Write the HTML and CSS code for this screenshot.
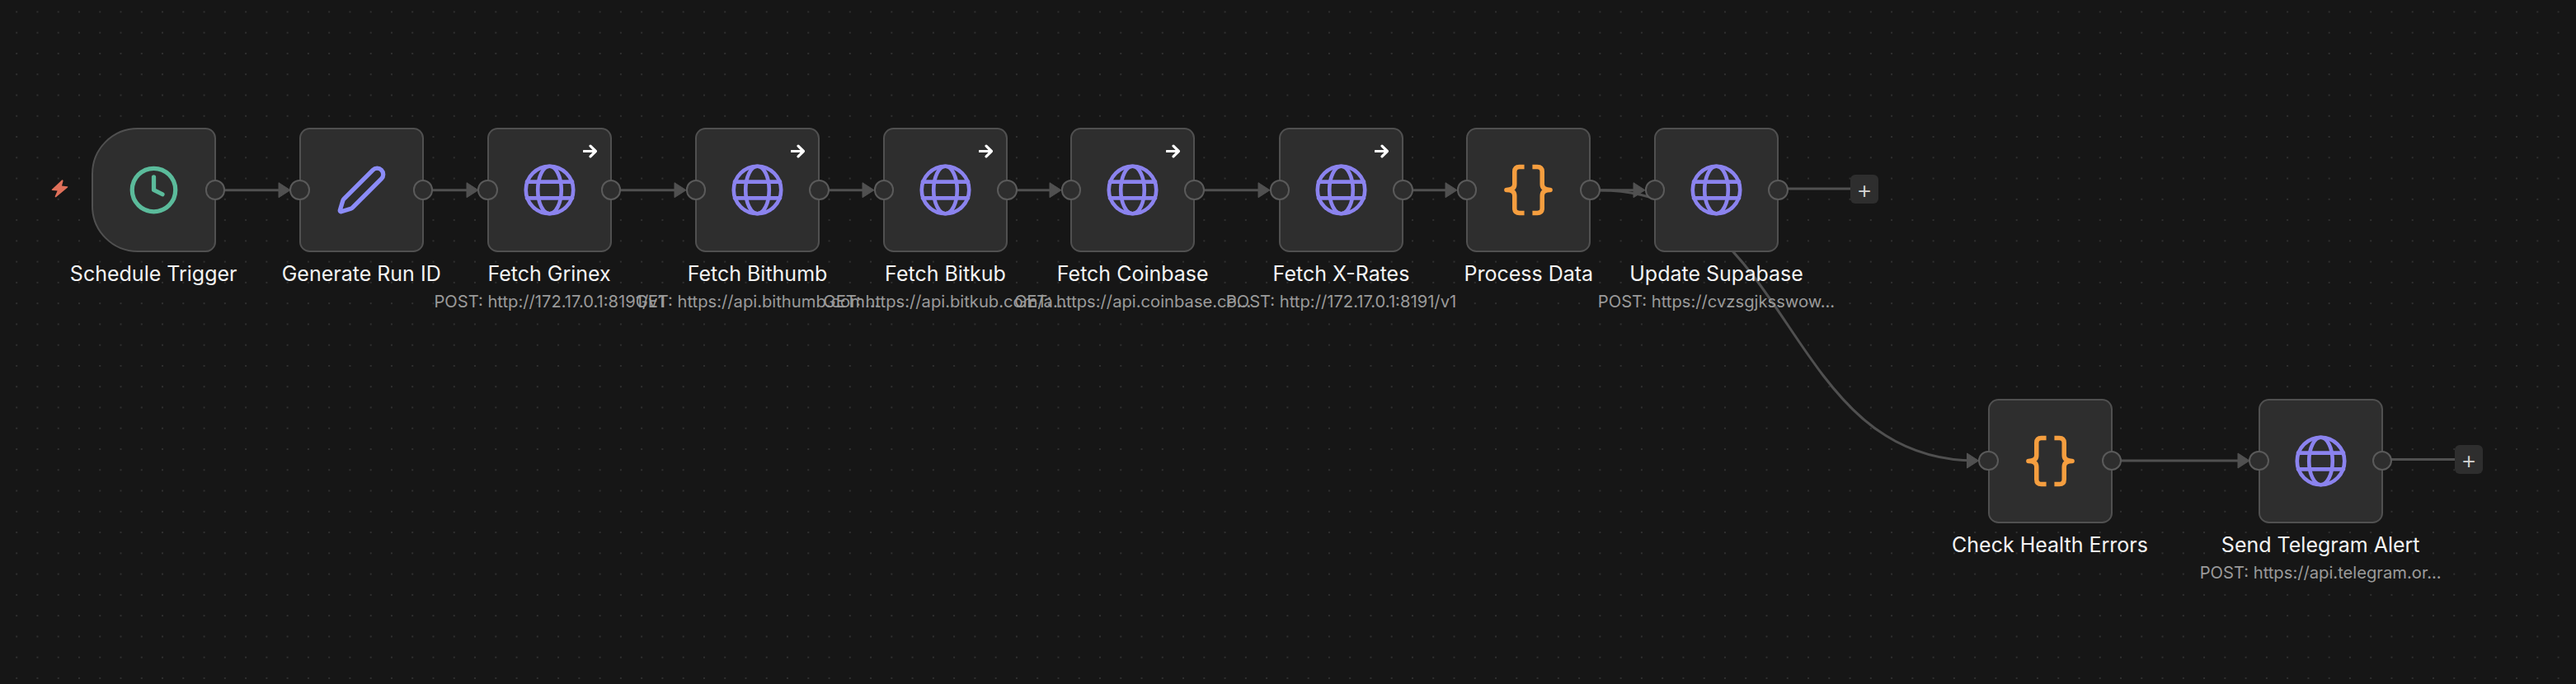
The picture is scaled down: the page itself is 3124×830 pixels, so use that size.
FILE: index.html
```html
<!DOCTYPE html>
<html lang="en">
<head>
<meta charset="utf-8">
<title>Workflow canvas</title>
<link rel="stylesheet" href="styles.css">
</head>
<body>
<main class="canvas">
  <svg class="wires" width="3124" height="830" viewBox="0 0 3124 830">
    <g class="wire">
      <path d="M262 230.7H340"/><path d="M514 230.7H568"/><path d="M741 230.7H820"/><path d="M994 230.7H1048"/>
      <path d="M1222 230.7H1276"/><path d="M1449 230.7H1528"/><path d="M1702 230.7H1756"/><path d="M1929 230.7H1984"/>
      <path d="M1941 231C2176 231 2161 559 2396 559"/>
      <path d="M2157 229H2250"/><path d="M2561 559H2716"/><path d="M2890 557.5H2985"/>
    </g>
    <g class="arrow">
      <path d="M338 221.7L352 230.7L338 239.7Z"/><path d="M566 221.7L580 230.7L566 239.7Z"/>
      <path d="M818 221.7L832 230.7L818 239.7Z"/><path d="M1046 221.7L1060 230.7L1046 239.7Z"/>
      <path d="M1273 221.7L1287 230.7L1273 239.7Z"/><path d="M1526 221.7L1540 230.7L1526 239.7Z"/>
      <path d="M1753 221.7L1767 230.7L1753 239.7Z"/><path d="M1981 221.7L1995 230.7L1981 239.7Z"/>
      <path d="M2385.5 550L2399.5 559L2385.5 568Z"/><path d="M2714 550L2728 559L2714 568Z"/>
    </g>
  </svg>

  <svg class="bolt" viewBox="0 0 21 22" width="21" height="22"><path d="M13 0.6L1 11.8Q0.2 12.8 1.5 13L7.6 13.6L4.6 20.6Q4.8 22 6.2 21L20 9.6Q21 8.6 19.6 8.2L13 7.6L14.6 1.4Q14.2 -0.2 13 0.6Z"/></svg>

  <article class="node at-schedule">
    <div class="box trigger">
      <svg class="icon" viewBox="0 0 24 24"><g class="teal"><circle cx="12" cy="12" r="10"/><polyline points="12 6 12 12 16 14"/></g></svg>
      <span class="handle out"></span>
    </div>
    <h3 class="label">Schedule Trigger</h3>
  </article>

  <article class="node at-generate">
    <div class="box">
      <span class="handle in"></span>
      <svg class="icon" viewBox="0 0 24 24"><g class="violet"><path d="M21.174 6.812a1 1 0 0 0-3.986-3.987L3.842 16.174a2 2 0 0 0-.5.83l-1.321 4.352a.5.5 0 0 0 .623.622l4.353-1.32a2 2 0 0 0 .83-.497z"/></g></svg>
      <span class="handle out"></span>
    </div>
    <h3 class="label">Generate Run ID</h3>
  </article>

  <article class="node at-grinex">
    <div class="box">
      <span class="handle in"></span>
      <svg class="corner" viewBox="0 0 16 16"><path d="M1 8H14M8.5 2L14.5 8L8.5 14"/></svg>
      <svg class="icon" viewBox="0 0 64 64"><g class="globe"><circle cx="32" cy="32" r="29.2"/><ellipse cx="32" cy="32" rx="14.5" ry="29.2"/><path d="M4 22H60M4 42H60"/></g></svg>
      <span class="handle out"></span>
    </div>
    <h3 class="label">Fetch Grinex</h3>
    <p class="sub">POST: http://172.17.0.1:8191/v1</p>
  </article>

  <article class="node at-bithumb">
    <div class="box">
      <span class="handle in"></span>
      <svg class="corner" viewBox="0 0 16 16"><path d="M1 8H14M8.5 2L14.5 8L8.5 14"/></svg>
      <svg class="icon" viewBox="0 0 64 64"><g class="globe"><circle cx="32" cy="32" r="29.2"/><ellipse cx="32" cy="32" rx="14.5" ry="29.2"/><path d="M4 22H60M4 42H60"/></g></svg>
      <span class="handle out"></span>
    </div>
    <h3 class="label">Fetch Bithumb</h3>
    <p class="sub">GET: https://api.bithumb.com...</p>
  </article>

  <article class="node at-bitkub">
    <div class="box">
      <span class="handle in"></span>
      <svg class="corner" viewBox="0 0 16 16"><path d="M1 8H14M8.5 2L14.5 8L8.5 14"/></svg>
      <svg class="icon" viewBox="0 0 64 64"><g class="globe"><circle cx="32" cy="32" r="29.2"/><ellipse cx="32" cy="32" rx="14.5" ry="29.2"/><path d="M4 22H60M4 42H60"/></g></svg>
      <span class="handle out"></span>
    </div>
    <h3 class="label">Fetch Bitkub</h3>
    <p class="sub">GET: https://api.bitkub.com/a...</p>
  </article>

  <article class="node at-coinbase">
    <div class="box">
      <span class="handle in"></span>
      <svg class="corner" viewBox="0 0 16 16"><path d="M1 8H14M8.5 2L14.5 8L8.5 14"/></svg>
      <svg class="icon" viewBox="0 0 64 64"><g class="globe"><circle cx="32" cy="32" r="29.2"/><ellipse cx="32" cy="32" rx="14.5" ry="29.2"/><path d="M4 22H60M4 42H60"/></g></svg>
      <span class="handle out"></span>
    </div>
    <h3 class="label">Fetch Coinbase</h3>
    <p class="sub">GET: https://api.coinbase.co...</p>
  </article>

  <article class="node at-xrates">
    <div class="box">
      <span class="handle in"></span>
      <svg class="corner" viewBox="0 0 16 16"><path d="M1 8H14M8.5 2L14.5 8L8.5 14"/></svg>
      <svg class="icon" viewBox="0 0 64 64"><g class="globe"><circle cx="32" cy="32" r="29.2"/><ellipse cx="32" cy="32" rx="14.5" ry="29.2"/><path d="M4 22H60M4 42H60"/></g></svg>
      <span class="handle out"></span>
    </div>
    <h3 class="label">Fetch X-Rates</h3>
    <p class="sub">POST: http://172.17.0.1:8191/v1</p>
  </article>

  <article class="node at-process">
    <div class="box">
      <span class="handle in"></span>
      <svg class="icon" viewBox="0 0 62 64"><g class="brace"><path d="M26 3.5H20Q14 3.5 14 9.5V25Q14 32 4 32Q14 32 14 39V54.5Q14 60.5 20 60.5H26"/><path d="M36 3.5H42Q48 3.5 48 9.5V25Q48 32 58 32Q48 32 48 39V54.5Q48 60.5 42 60.5H36"/></g></svg>
      <span class="handle out"></span>
    </div>
    <h3 class="label">Process Data</h3>
  </article>

  <article class="node at-update">
    <div class="box">
      <span class="handle in"></span>
      <svg class="icon" viewBox="0 0 64 64"><g class="globe"><circle cx="32" cy="32" r="29.2"/><ellipse cx="32" cy="32" rx="14.5" ry="29.2"/><path d="M4 22H60M4 42H60"/></g></svg>
      <span class="handle out"></span>
    </div>
    <h3 class="label">Update Supabase</h3>
    <p class="sub">POST: https://cvzsgjksswow...</p>
  </article>

  <button class="plus at-plus-a" type="button">+</button>

  <article class="node at-check">
    <div class="box">
      <span class="handle in"></span>
      <svg class="icon" viewBox="0 0 62 64"><g class="brace"><path d="M26 3.5H20Q14 3.5 14 9.5V25Q14 32 4 32Q14 32 14 39V54.5Q14 60.5 20 60.5H26"/><path d="M36 3.5H42Q48 3.5 48 9.5V25Q48 32 58 32Q48 32 48 39V54.5Q48 60.5 42 60.5H36"/></g></svg>
      <span class="handle out"></span>
    </div>
    <h3 class="label">Check Health Errors</h3>
  </article>

  <article class="node at-send">
    <div class="box">
      <span class="handle in"></span>
      <svg class="icon" viewBox="0 0 64 64"><g class="globe"><circle cx="32" cy="32" r="29.2"/><ellipse cx="32" cy="32" rx="14.5" ry="29.2"/><path d="M4 22H60M4 42H60"/></g></svg>
      <span class="handle out"></span>
    </div>
    <h3 class="label">Send Telegram Alert</h3>
    <p class="sub">POST: https://api.telegram.or...</p>
  </article>

  <button class="plus at-plus-b" type="button">+</button>
</main>
</body>
</html>
```
FILE: styles.css
```css
* { box-sizing: border-box; }
html, body { margin: 0; padding: 0; background: #161616; }
body { width: 3124px; height: 830px; overflow: hidden; font-family: Inter, "Liberation Sans", sans-serif; }

.canvas {
  position: relative;
  width: 3124px;
  height: 830px;
  background-color: #161616;
  background-image: radial-gradient(circle at center, #303030 0, #303030 0.8px, transparent 1.2px);
  background-size: 25.27px 25.27px;
  background-position: 7.56px 1.8px;
}

.wires { position: absolute; left: 0; top: 0; }
.wire path { fill: none; stroke: #505050; stroke-width: 3; }
.arrow path { fill: #505050; stroke: #505050; stroke-width: 1; stroke-linejoin: round; }

.bolt { position: absolute; left: 62px; top: 218px; }
.bolt path { fill: #e0705a; }

.node {
  position: absolute;
  width: 151px;
  display: flex;
  flex-direction: column;
  align-items: center;
}
.at-schedule { left: 110.7px; top: 155px; }
.at-generate { left: 362.7px; top: 155px; }
.at-grinex { left: 590.6px; top: 155px; }
.at-bithumb { left: 843px; top: 155px; }
.at-bitkub { left: 1071px; top: 155px; }
.at-coinbase { left: 1298.2px; top: 155px; }
.at-xrates { left: 1551px; top: 155px; }
.at-process { left: 1778.3px; top: 155px; }
.at-update { left: 2006px; top: 155px; }
.at-check { left: 2410.5px; top: 483.5px; }
.at-send { left: 2738.7px; top: 483.5px; }

.box {
  position: relative;
  width: 151px;
  height: 151px;
  flex: none;
  display: flex;
  align-items: center;
  justify-content: center;
  background: #2e2e2e;
  border: 2.5px solid #505050;
  border-radius: 12.6px;
}
.trigger { border-radius: 56px 12.6px 12.6px 56px; }

.handle {
  position: absolute;
  top: 50%;
  width: 24.5px;
  height: 24.5px;
  margin-top: -12.25px;
  background: #2e2e2e;
  border: 2px solid #5a5a5a;
  border-radius: 50%;
}
.handle.in { left: -13.5px; }
.handle.out { right: -13.5px; }

.icon { width: 63px; height: 63px; display: block; }
.teal, .violet, .globe, .brace { fill: none; stroke-linecap: round; stroke-linejoin: round; }
.teal { stroke: #5bbb9b; stroke-width: 2; }
.violet { stroke: #8b8cf7; stroke-width: 2; }
.globe { stroke: #8b83ee; stroke-width: 4.7; }
.brace { stroke: #f59e3f; stroke-width: 5.6; stroke-linecap: butt; }

.corner { position: absolute; right: 16px; top: 17.5px; width: 17px; height: 17px; }
.corner path { fill: none; stroke: #ffffff; stroke-width: 3; stroke-linecap: round; stroke-linejoin: round; }

.label {
  margin: 12px 0 0;
  font-size: 25px;
  line-height: 28px;
  font-weight: 400;
  color: #f4f4f4;
  white-space: nowrap;
}
.sub {
  margin: 8px 0 0;
  font-size: 20.2px;
  line-height: 24px;
  font-weight: 400;
  color: #9a9a9a;
  white-space: nowrap;
}

.plus {
  position: absolute;
  width: 34px;
  height: 35px;
  padding: 0;
  display: flex;
  align-items: center;
  justify-content: center;
  font: 300 30px/1 Inter, "Liberation Sans", sans-serif;
  color: #d6d6d6;
  background: #2e2e2e;
  border: 0;
  border-radius: 6px;
}
.at-plus-a { left: 2244px; top: 212px; }
.at-plus-b { left: 2977px; top: 540px; }
```
